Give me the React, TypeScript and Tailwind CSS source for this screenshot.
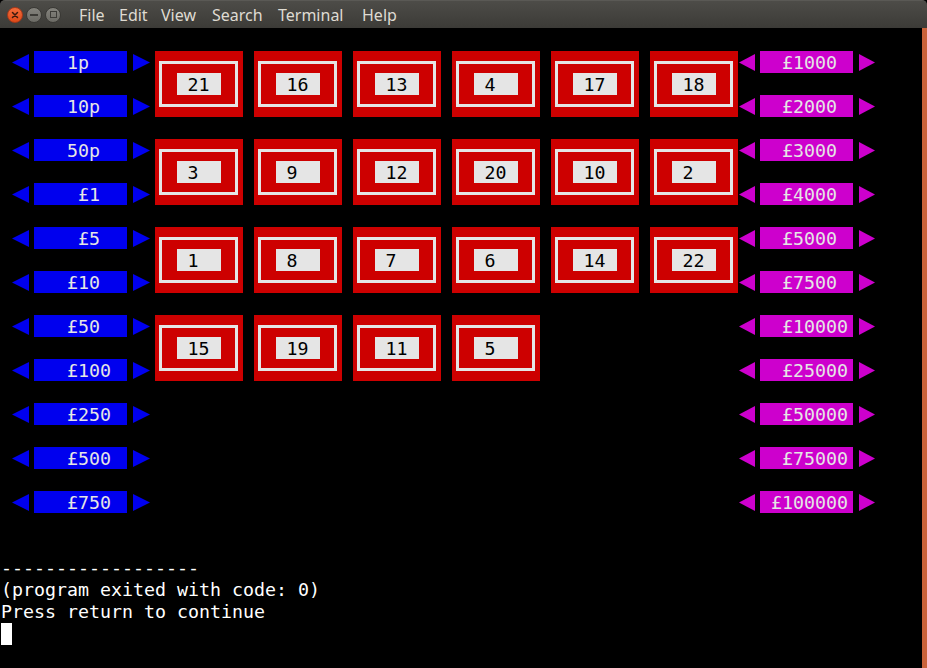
const mono = { fontFamily: '"DejaVu Sans Mono", "Liberation Mono", monospace' };

const pence = [
  { label: "1p", pad: 3 },
  { label: "10p", pad: 3 },
  { label: "50p", pad: 3 },
  { label: "£1", pad: 4 },
  { label: "£5", pad: 4 },
  { label: "£10", pad: 3 },
  { label: "£50", pad: 3 },
  { label: "£100", pad: 3 },
  { label: "£250", pad: 3 },
  { label: "£500", pad: 3 },
  { label: "£750", pad: 3 },
];

const pounds = [
  { label: "£1000", pad: 2 },
  { label: "£2000", pad: 2 },
  { label: "£3000", pad: 2 },
  { label: "£4000", pad: 2 },
  { label: "£5000", pad: 2 },
  { label: "£7500", pad: 2 },
  { label: "£10000", pad: 2 },
  { label: "£25000", pad: 2 },
  { label: "£50000", pad: 2 },
  { label: "£75000", pad: 2 },
  { label: "£100000", pad: 1 },
];

const boxes = [21, 16, 13, 4, 17, 18, 3, 9, 12, 20, 10, 2, 1, 8, 7, 6, 14, 22, 15, 19, 11, 5];

function Arrow({ dir, color, w }: { dir: "l" | "r"; color: string; w: number }) {
  const pts = dir === "l" ? `${w},0 0,8.5 ${w},17` : `0,0 ${w},8.5 0,17`;
  return (
    <svg width={w} height={17} viewBox={`0 0 ${w} 17`} className="shrink-0 mt-[3px]">
      <polygon points={pts} fill={color} />
    </svg>
  );
}

function Label({ text, pad, bg }: { text: string; pad: number; bg: string }) {
  return (
    <div
      className={`w-[93px] h-[22px] leading-[23px] text-[18.27px] text-[#e5e5e5] whitespace-pre ${bg}`}
      style={mono}
    >
      {" ".repeat(pad) + text}
    </div>
  );
}

function Box({ n }: { n: number }) {
  return (
    <div className="w-[88px] h-[66px] bg-[#cd0000] pt-[10px] pb-[10px] pl-[4px] pr-[5px]">
      <div className="w-full h-full border-[3px] border-[#e5e5e5] flex items-center justify-center">
        <div
          className="w-[44px] h-[22px] bg-[#e5e5e5] text-black pl-[11px] text-[18.27px] leading-[23px]"
          style={mono}
        >
          {n}
        </div>
      </div>
    </div>
  );
}

function WinButton({ kind }: { kind: "close" | "min" | "max" }) {
  if (kind === "close") {
    return (
      <div className="w-[16px] h-[16px] rounded-full bg-gradient-to-b from-[#f26b3a] to-[#df4a16] border border-[#a8391a] flex items-center justify-center">
        <svg width="8" height="8" viewBox="0 0 8 8">
          <path d="M1.5 1.5 L6.5 6.5 M6.5 1.5 L1.5 6.5" stroke="#3a1a0e" strokeWidth="1.5" strokeLinecap="round" />
        </svg>
      </div>
    );
  }
  return (
    <div className="w-[16px] h-[16px] rounded-full bg-gradient-to-b from-[#84837d] to-[#6c6b65] border border-[#3a3935] flex items-center justify-center">
      {kind === "min" ? (
        <div className="w-[8px] h-[2px] bg-[#3c3b37]" />
      ) : (
        <div className="w-[7px] h-[7px] border-[1.5px] border-[#3c3b37]" />
      )}
    </div>
  );
}

export default function App() {
  const menu = [
    { t: "File", w: "w-[40px]" },
    { t: "Edit", w: "w-[42px]" },
    { t: "View", w: "w-[51px]" },
    { t: "Search", w: "w-[66px]" },
    { t: "Terminal", w: "w-[84px]" },
    { t: "Help", w: "w-[50px]" },
  ];

  return (
    <div className="w-[927px] h-[668px] bg-black overflow-hidden flex flex-col">
      {/* title bar */}
      <div
        className="h-[28px] shrink-0 flex items-center rounded-t-[5px] bg-gradient-to-b from-[#4d4c48] to-[#3c3b37] border-t border-[#5a5955]"
        style={{ fontFamily: '"Noto Sans", "Open Sans", sans-serif' }}
      >
        <div className="flex items-center gap-[3px] pl-[7px]">
          <WinButton kind="close" />
          <WinButton kind="min" />
          <WinButton kind="max" />
        </div>
        <div className="flex items-center ml-[18px] text-[16px] text-[#dfdbd2]">
          {menu.map((m) => (
            <span key={m.t} className={m.w}>
              {m.t}
            </span>
          ))}
        </div>
      </div>

      {/* terminal */}
      <div className="flex-1 flex">
        <div className="flex-1 pt-[23px]">
          <div className="flex items-start">
            <div className="flex flex-col gap-[22px] pl-[12px]">
              {pence.map((p) => (
                <div key={p.label} className="flex items-start h-[22px]">
                  <Arrow dir="l" color="#0000ee" w={17} />
                  <div className="ml-[5px]">
                    <Label text={p.label} pad={p.pad} bg="bg-[#0000ee]" />
                  </div>
                  <div className="ml-[6px]">
                    <Arrow dir="r" color="#0000ee" w={17} />
                  </div>
                </div>
              ))}
            </div>

            <div className="ml-[5px] grid grid-cols-[repeat(6,88px)] gap-x-[11px] gap-y-[22px]">
              {boxes.map((n) => (
                <Box key={n} n={n} />
              ))}
            </div>

            <div className="ml-[1px] flex flex-col gap-[22px]">
              {pounds.map((p) => (
                <div key={p.label} className="flex items-start h-[22px]">
                  <Arrow dir="l" color="#cd00cd" w={16} />
                  <div className="ml-[5px]">
                    <Label text={p.label} pad={p.pad} bg="bg-[#cd00cd]" />
                  </div>
                  <div className="ml-[6px]">
                    <Arrow dir="r" color="#cd00cd" w={16} />
                  </div>
                </div>
              ))}
            </div>
          </div>

          <div
            className="mt-[44px] pl-[1px] text-[18.27px] leading-[22px] text-white whitespace-pre"
            style={mono}
          >
            <div>------------------</div>
            <div>(program exited with code: 0)</div>
            <div>Press return to continue</div>
            <div className="w-[11px] h-[22px] bg-white" />
          </div>
        </div>
        <div className="w-[5px] bg-[#c9623a]" />
      </div>
    </div>
  );
}
